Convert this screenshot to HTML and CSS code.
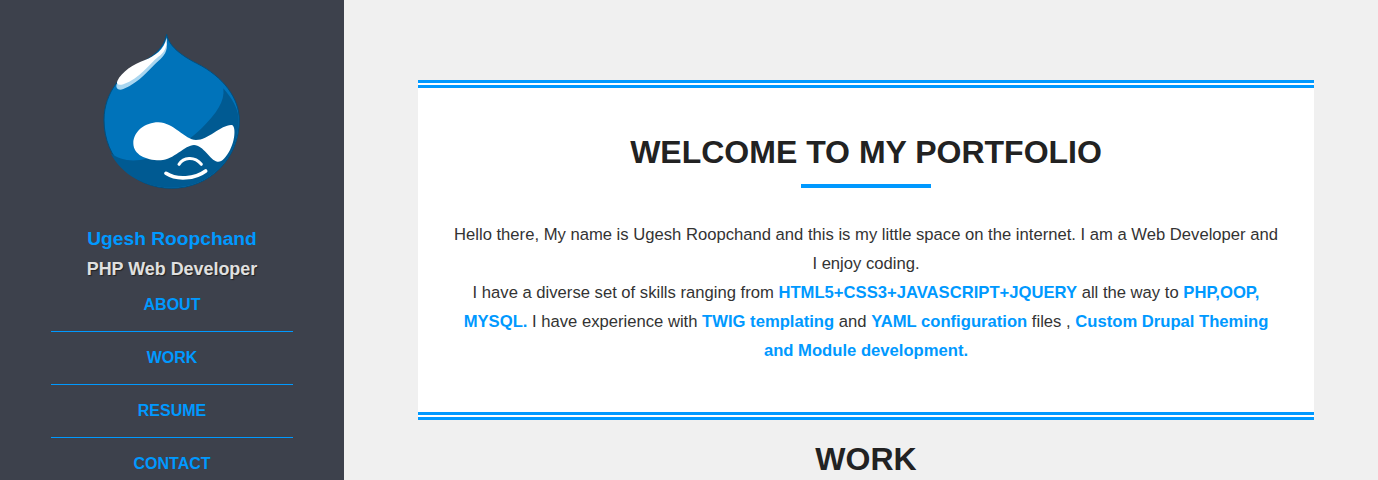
FILE: index.html
```html
<!DOCTYPE html>
<html lang="en">
<head>
  <meta charset="UTF-8">
  <title>Ugesh Roopchand - Portfolio</title>
  <link rel="stylesheet" href="styles.css">
</head>
<body>

  <div class="page">
    <aside class="sidebar">
      <!-- Drupal drop, coordinates are 3x the drawn size -->
      <svg class="logo" viewBox="0 0 495 525" width="165" height="175" aria-label="Drupal logo">
        <path fill="#0073ba" stroke="#004f80" stroke-width="3" d="M230 28C235 60 270 90 320 115C400 155 448 220 448 285C448 400 360 490 245 490C130 490 42 400 42 285C42 200 100 140 150 115C190 95 222 70 230 28Z"/>
        <path fill="#005a92" d="M400 190C425 220 446 250 446 285C446 400 360 488 245 488C165 488 95 450 62 385C85 402 115 410 150 405C215 395 290 355 335 310C380 265 405 230 400 190Z"/>
        <path fill="#a9d6f0" d="M230 50C234 80 222 92 205 108C180 130 150 172 100 192C85 198 76 190 80 178C85 170 120 150 165 120C195 100 222 85 230 50Z"/>
        <path fill="#fff" d="M230 38C233 68 220 85 205 95C180 115 150 160 100 178C85 182 78 178 82 168C95 140 130 118 165 105C195 92 222 75 230 38Z"/>
        <path fill="#fff" d="M130 355C130 320 165 292 205 292C250 292 285 345 318 345C355 345 395 298 425 300C438 302 436 345 420 375C408 398 395 412 382 410C360 406 340 360 312 360C285 360 250 405 212 406C170 407 130 390 130 355Z"/>
        <path fill="none" stroke="#fff" stroke-width="9" stroke-linecap="round" d="M267 418C280 398 312 392 334 418"/>
        <path fill="none" stroke="#fff" stroke-width="11" stroke-linecap="round" d="M228 445C260 466 315 462 347 438"/>
      </svg>
      <h2 class="name">Ugesh Roopchand</h2>
      <h3 class="role">PHP Web Developer</h3>
      <nav class="nav">
        <a href="#about">ABOUT</a>
        <a href="#work">WORK</a>
        <a href="#resume">RESUME</a>
        <a href="#contact">CONTACT</a>
      </nav>
    </aside>

    <main class="content">
      <section class="welcome">
        <h1>WELCOME TO MY PORTFOLIO</h1>
        <div class="underline"></div>
        <p>
          Hello there, My name is Ugesh Roopchand and this is my little space on the internet. I am a Web Developer and I enjoy coding.<br>
          I have a diverse set of skills ranging from <b>HTML5+CSS3+JAVASCRIPT+JQUERY</b> all the way to <b>PHP,OOP, MYSQL.</b> I have experience with <b>TWIG templating</b> and <b>YAML configuration</b> files , <b>Custom Drupal Theming and Module development.</b>
        </p>
      </section>
      <h2 class="section-title">WORK</h2>
    </main>
  </div>

</body>
</html>
```
FILE: styles.css
```css
html, body {
  height: 100%;
}

body {
  margin: 0;
  font-family: "Liberation Sans", Arial, sans-serif;
  background: #f0f0f0;
  color: #222;
  overflow: hidden;
}

.page {
  display: flex;
  height: 480px;
  overflow: hidden;
}

.sidebar {
  width: 344px;
  flex-shrink: 0;
  background: #3d414c;
  text-align: center;
  padding-top: 25px;
  box-sizing: border-box;
}

.logo {
  display: block;
  margin: 0 auto;
}

.name {
  margin: 27px 0 0;
  font-size: 19.2px;
  line-height: 24px;
  color: #0099ff;
}

.role {
  margin: 9px 0 0;
  font-size: 17.92px;
  line-height: 19px;
  color: #e0e0e0;
  text-shadow: 1px 1px 1px #222;
}

.nav {
  width: 242px;
  margin: 0 auto;
}

.nav a {
  display: block;
  height: 52px;
  line-height: 52px;
  font-size: 16px;
  font-weight: bold;
  color: #0099ff;
  text-decoration: none;
  border-bottom: 1px solid #0099ff;
}

.content {
  flex: 1;
  padding: 80px 64px 0 74px;
}

.welcome {
  background: #fff;
  border-top: 8px double #0099ff;
  border-bottom: 8px double #0099ff;
  height: 340px;
  box-sizing: border-box;
  padding: 45px 32px 0;
  text-align: center;
}

.welcome h1 {
  margin: 0;
  font-size: 32px;
  line-height: 38px;
  color: #222;
}

.underline {
  width: 130px;
  height: 4px;
  margin: 13px auto 0;
  background: #0099ff;
}

.welcome p {
  margin: 32px 0 0;
  font-size: 16.64px;
  line-height: 29px;
  color: #333;
}

.welcome b {
  color: #0099ff;
}

.section-title {
  margin: 20px 0 0;
  font-size: 32px;
  line-height: 38px;
  text-align: center;
  color: #222;
}
```
